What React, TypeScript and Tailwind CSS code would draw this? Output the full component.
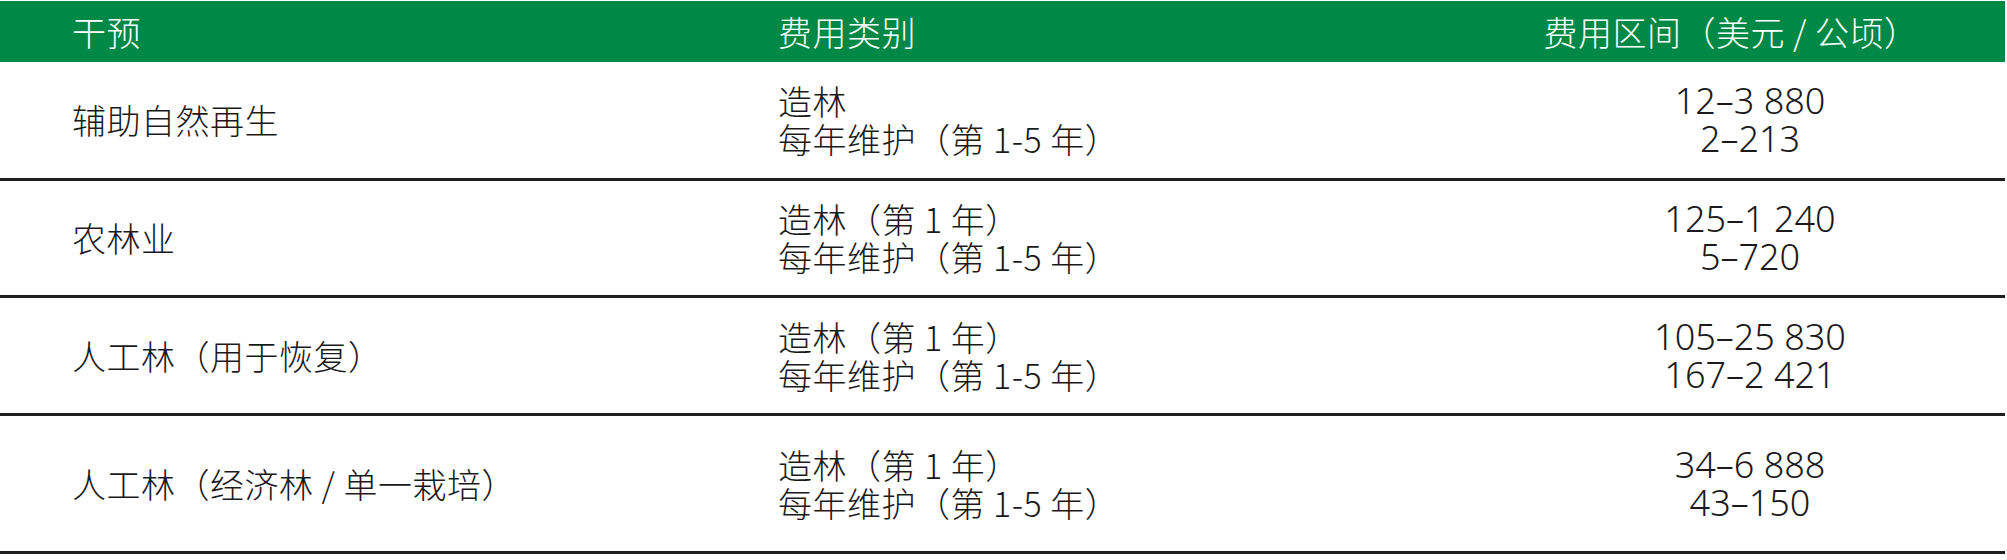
const ROWS = [
  {
    name: "辅助自然再生",
    types: ["造林", "每年维护（第 1-5 年）"],
    ranges: ["12–3 880", "2–213"],
    h: "h-[119px]",
  },
  {
    name: "农林业",
    types: ["造林（第 1 年）", "每年维护（第 1-5 年）"],
    ranges: ["125–1 240", "5–720"],
    h: "h-[117px]",
  },
  {
    name: "人工林（用于恢复）",
    types: ["造林（第 1 年）", "每年维护（第 1-5 年）"],
    ranges: ["105–25 830", "167–2 421"],
    h: "h-[118px]",
  },
  {
    name: "人工林（经济林 / 单一栽培）",
    types: ["造林（第 1 年）", "每年维护（第 1-5 年）"],
    ranges: ["34–6 888", "43–150"],
    h: "h-[138px]",
  },
];

export default function App() {
  return (
    <div className="w-[2007px] h-[560px] bg-white pt-px font-['Noto_Sans_CJK_SC',sans-serif] font-light text-[34px] tracking-[0.5px] text-[#1a1a1a]">
      <div className="w-[2005px]">
        {/* header */}
        <div className="grid grid-cols-[778px_717px_1fr] items-center h-[61px] bg-[#008847] text-white leading-none">
          <div className="pl-[72px]">干预</div>
          <div>费用类别</div>
          <div className="text-center pr-[38px]">费用区间（美元 / 公顷）</div>
        </div>

        {ROWS.map((r) => (
          <div
            key={r.name}
            className={`grid grid-cols-[778px_717px_1fr] items-center box-border border-b-[3px] border-[#1f1f1f] ${r.h}`}
          >
            <div className="pl-[72px] leading-[38px]">{r.name}</div>
            <div className="leading-[38px]">
              {r.types.map((t) => (
                <div key={t}>{t}</div>
              ))}
            </div>
            <div className="text-center leading-[38px] font-['Noto_Sans',sans-serif] text-[36px] tracking-normal">
              {r.ranges.map((n) => (
                <div key={n}>{n}</div>
              ))}
            </div>
          </div>
        ))}
      </div>
    </div>
  );
}
